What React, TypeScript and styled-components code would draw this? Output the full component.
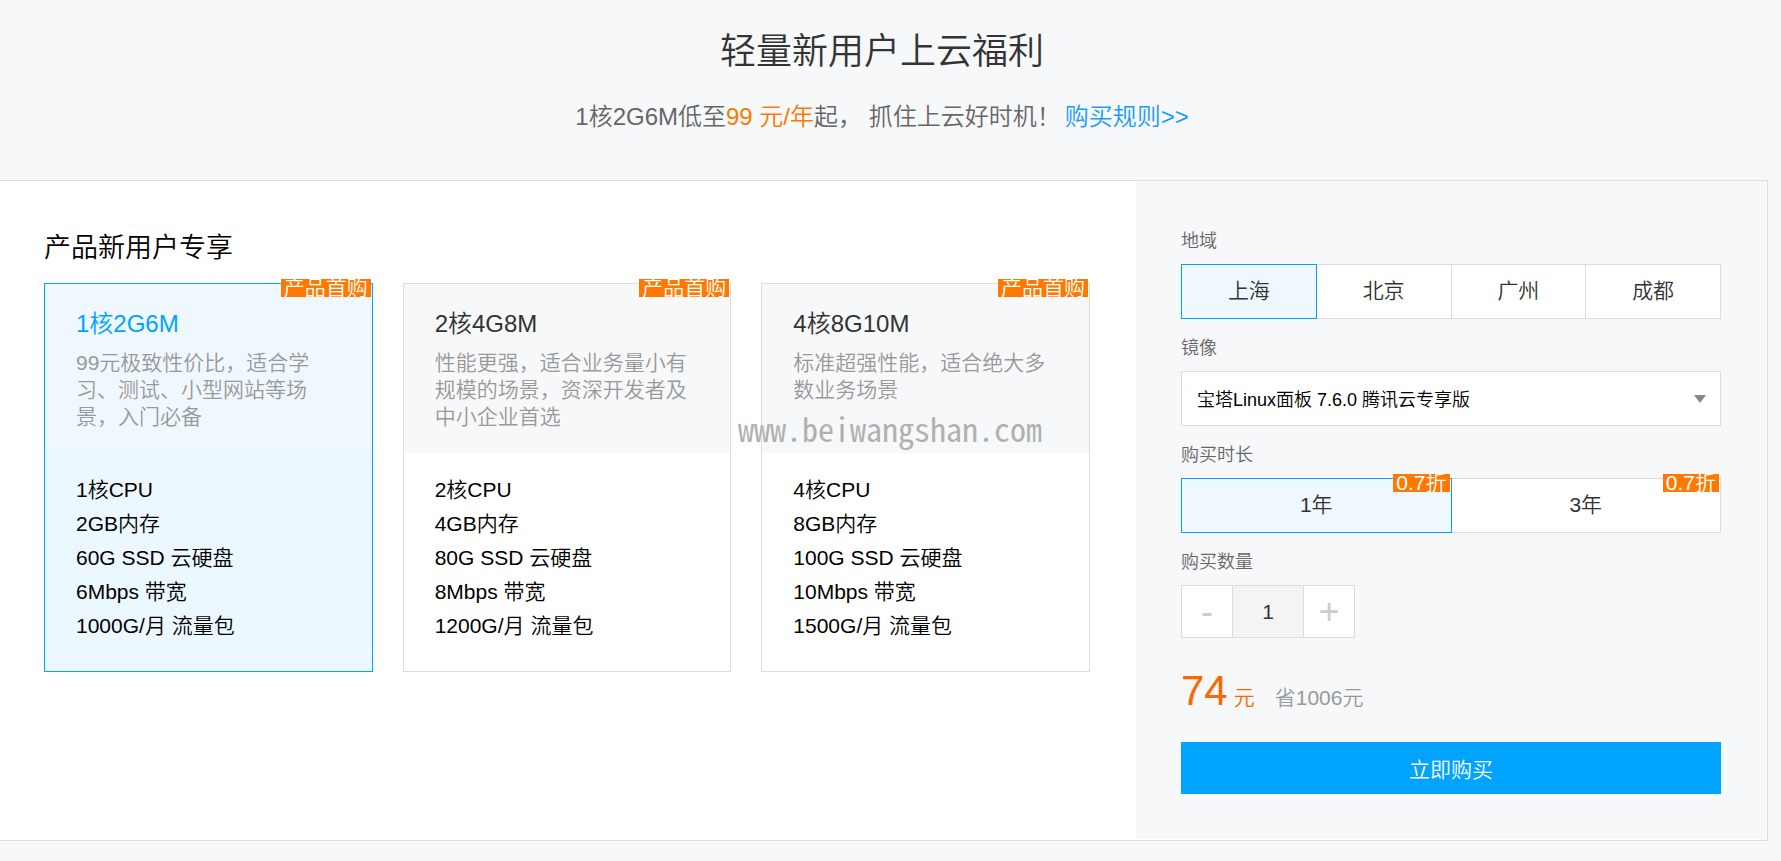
import React, { useState } from "react";
import styled, { createGlobalStyle, css } from "styled-components";

const GlobalStyle = createGlobalStyle`
  * { box-sizing: border-box; }
  body {
    margin: 0;
    background: #f7f8fa;
    color: #000;
    font-family: "Liberation Sans", "Noto Sans CJK SC", sans-serif;
    font-weight: 350;
    font-size: 21px;
  }
  button, input, select { font: inherit; color: inherit; }
`;

const Page = styled.main`
  position: relative;
  padding-bottom: 19px;
  overflow-x: hidden;
`;

const Container = styled.div`
  margin: 0 13px 0 -4px;
`;

const Header = styled.header`
  padding: 25px 0 45px;
  text-align: center;
`;

const Title = styled.h1`
  margin: 0 0 20px;
  font-size: 36px;
  line-height: 54px;
  font-weight: inherit;
  color: #333;
`;

const Subtitle = styled.p`
  margin: 0;
  font-size: 24px;
  line-height: 36px;
  color: #666;
`;

const Highlight = styled.span`
  color: #ff7800;
`;

const RulesLink = styled.a`
  margin-left: 4px;
  color: #1a9bff;
  text-decoration: none;
`;

const Panel = styled.form`
  display: flex;
  padding: 0 1px 1px 0;
  border: 1px solid #dcdcdc;
  background: #fff;
`;

const Products = styled.section`
  position: relative;
  flex: 1;
  min-width: 0;
  padding: 47px 46px 45px 47px;
`;

const SectionTitle = styled.h2`
  margin: 0 0 15px;
  font-size: 27px;
  line-height: 40px;
  font-weight: inherit;
`;

const CardGrid = styled.div`
  display: grid;
  grid-template-columns: repeat(3, 1fr);
  gap: 30px;
`;

const HiddenRadio = styled.input`
  position: absolute;
  opacity: 0;
  pointer-events: none;
`;

const Card = styled.label<{ $active: boolean }>`
  position: relative;
  display: flex;
  flex-direction: column;
  border: 1px solid ${(p) => (p.$active ? "#00a4ff" : "#dcdcdc")};
  background: ${(p) => (p.$active ? "#ecf8ff" : "#fff")};
  cursor: pointer;
`;

const Badge = styled.span`
  position: absolute;
  top: -5px;
  right: 1px;
  height: 18px;
  padding: 0 3px;
  background: #ff7800;
  color: #fff;
  font-size: 21px;
  line-height: 18px;
  white-space: nowrap;
`;

const CardHead = styled.span<{ $active: boolean }>`
  display: block;
  min-height: 169px;
  padding: 22px 43px 20px 31px;
  background: ${(p) => (p.$active ? "#f0f8ff" : "#f7f8fa")};
`;

const CardName = styled.span<{ $active: boolean }>`
  display: block;
  margin-bottom: 7px;
  font-size: 24px;
  line-height: 36px;
  color: ${(p) => (p.$active ? "#00a4ff" : "#333")};
`;

const CardDesc = styled.span`
  display: block;
  line-height: 27px;
  color: #999;
`;

const SpecList = styled.span`
  display: flex;
  flex-direction: column;
  padding: 20px 31px 28px;
`;

const Spec = styled.span`
  line-height: 34px;
`;

const Watermark = styled.span`
  position: absolute;
  top: 231px;
  right: 94px;
  font-family: "Noto Sans Mono CJK SC", "Liberation Mono", monospace;
  font-size: 32px;
  line-height: 32px;
  color: #b0b0b0;
  pointer-events: none;
`;

const Config = styled.aside`
  flex: 0 0 630px;
  padding: 47px 45px 45px;
  background: #f7f8fa;
`;

const Group = styled.fieldset`
  min-width: 0;
  margin: 0 0 16px;
  padding: 0;
  border: 0;
`;

const caption = css`
  display: block;
  margin-bottom: 9px;
  padding: 0;
  font-size: 18px;
  line-height: 27px;
  color: #666;
`;

const Legend = styled.legend`
  ${caption}
`;

const FieldLabel = styled.label`
  ${caption}
`;

const Options = styled.div`
  display: flex;
`;

const Option = styled.label<{ $active: boolean }>`
  position: relative;
  flex: 1;
  height: 55px;
  border: 1px solid #dcdcdc;
  background: #fff;
  color: #333;
  line-height: 51px;
  text-align: center;
  cursor: pointer;

  & + & {
    border-left-width: 0;
  }

  ${(p) =>
    p.$active &&
    css`
      && {
        border: 1px solid #00a4ff;
        background: #f0f8ff;
      }
    `}
`;

const SelectWrap = styled.div`
  position: relative;
`;

const Select = styled.select`
  display: block;
  width: 100%;
  height: 55px;
  padding: 3px 40px 0 15px;
  border: 1px solid #dcdcdc;
  border-radius: 0;
  background: #fff;
  color: #000;
  font-size: 18px;
  appearance: none;
`;

const Arrow = styled.svg`
  position: absolute;
  top: 24px;
  right: 15px;
  pointer-events: none;
`;

const Stepper = styled.div`
  display: flex;
  height: 53px;
`;

const StepButton = styled.button`
  width: 52px;
  padding: 0;
  border: 1px solid #dcdcdc;
  background: #fff;
  color: #ccc;
  font-size: 36px;
  line-height: 46px;
`;

const Quantity = styled.input`
  width: 70px;
  padding: 0;
  border: solid #dcdcdc;
  border-width: 1px 0;
  background: #f3f4f6;
  color: #333;
  text-align: center;
`;

const Price = styled.p`
  display: flex;
  align-items: baseline;
  margin: 26px 0 17px;
  line-height: 54px;
  color: #ff6600;
`;

const Amount = styled.span`
  margin-right: 6px;
  font-size: 42px;
`;

const Saving = styled.span`
  margin-left: 20px;
  color: #999;
`;

const BuyButton = styled.button`
  display: block;
  width: 100%;
  height: 52px;
  padding: 0;
  border: 0;
  background: #00a4ff;
  color: #fff;
`;

const plans = [
  {
    name: "1核2G6M",
    desc: "99元极致性价比，适合学习、测试、小型网站等场景，入门必备",
    specs: ["1核CPU", "2GB内存", "60G SSD 云硬盘", "6Mbps 带宽", "1000G/月 流量包"],
  },
  {
    name: "2核4G8M",
    desc: "性能更强，适合业务量小有规模的场景，资深开发者及中小企业首选",
    specs: ["2核CPU", "4GB内存", "80G SSD 云硬盘", "8Mbps 带宽", "1200G/月 流量包"],
  },
  {
    name: "4核8G10M",
    desc: "标准超强性能，适合绝大多数业务场景",
    specs: ["4核CPU", "8GB内存", "100G SSD 云硬盘", "10Mbps 带宽", "1500G/月 流量包"],
  },
];

const regions = ["上海", "北京", "广州", "成都"];
const durations = ["1年", "3年"];

interface ChoiceProps {
  legend: string;
  name: string;
  items: string[];
  badge?: string;
}

function Choice({ legend, name, items, badge }: ChoiceProps) {
  const [value, setValue] = useState(items[0]);
  return (
    <Group>
      <Legend>{legend}</Legend>
      <Options>
        {items.map((item) => (
          <Option key={item} $active={item === value}>
            <HiddenRadio
              type="radio"
              name={name}
              checked={item === value}
              onChange={() => setValue(item)}
            />
            {item}
            {badge && <Badge>{badge}</Badge>}
          </Option>
        ))}
      </Options>
    </Group>
  );
}

export default function App() {
  const [plan, setPlan] = useState(0);
  const [count, setCount] = useState(1);

  return (
    <Page lang="zh-CN">
      <GlobalStyle />
      <Container>
        <Header>
          <Title>轻量新用户上云福利</Title>
          <Subtitle>
            1核2G6M低至<Highlight>99 元/年</Highlight>起， 抓住上云好时机！
            <RulesLink href="#rules">购买规则&gt;&gt;</RulesLink>
          </Subtitle>
        </Header>
        <Panel onSubmit={(e) => e.preventDefault()}>
          <Products>
            <SectionTitle>产品新用户专享</SectionTitle>
            <CardGrid>
              {plans.map((p, i) => (
                <Card key={p.name} $active={i === plan}>
                  <HiddenRadio
                    type="radio"
                    name="plan"
                    checked={i === plan}
                    onChange={() => setPlan(i)}
                  />
                  <CardHead $active={i === plan}>
                    <CardName $active={i === plan}>{p.name}</CardName>
                    <CardDesc>{p.desc}</CardDesc>
                  </CardHead>
                  <SpecList>
                    {p.specs.map((s) => (
                      <Spec key={s}>{s}</Spec>
                    ))}
                  </SpecList>
                  <Badge>产品首购</Badge>
                </Card>
              ))}
            </CardGrid>
            <Watermark>www.beiwangshan.com</Watermark>
          </Products>
          <Config>
            <Choice legend="地域" name="region" items={regions} />
            <Group>
              <FieldLabel htmlFor="image">镜像</FieldLabel>
              <SelectWrap>
                <Select id="image">
                  <option>宝塔Linux面板 7.6.0 腾讯云专享版</option>
                </Select>
                <Arrow width="12" height="8" viewBox="0 0 12 8" aria-hidden="true">
                  <path d="M0 0H12L6 8Z" fill="#888" />
                </Arrow>
              </SelectWrap>
            </Group>
            <Choice legend="购买时长" name="duration" items={durations} badge="0.7折" />
            <FieldLabel htmlFor="quantity">购买数量</FieldLabel>
            <Stepper>
              <StepButton
                type="button"
                aria-label="减少数量"
                onClick={() => setCount(Math.max(1, count - 1))}
              >
                -
              </StepButton>
              <Quantity
                id="quantity"
                type="text"
                inputMode="numeric"
                value={count}
                onChange={(e) => setCount(Math.max(1, Number(e.target.value) || 1))}
              />
              <StepButton
                type="button"
                aria-label="增加数量"
                onClick={() => setCount(count + 1)}
              >
                +
              </StepButton>
            </Stepper>
            <Price>
              <Amount>74</Amount>元<Saving>省1006元</Saving>
            </Price>
            <BuyButton type="submit">立即购买</BuyButton>
          </Config>
        </Panel>
      </Container>
    </Page>
  );
}
